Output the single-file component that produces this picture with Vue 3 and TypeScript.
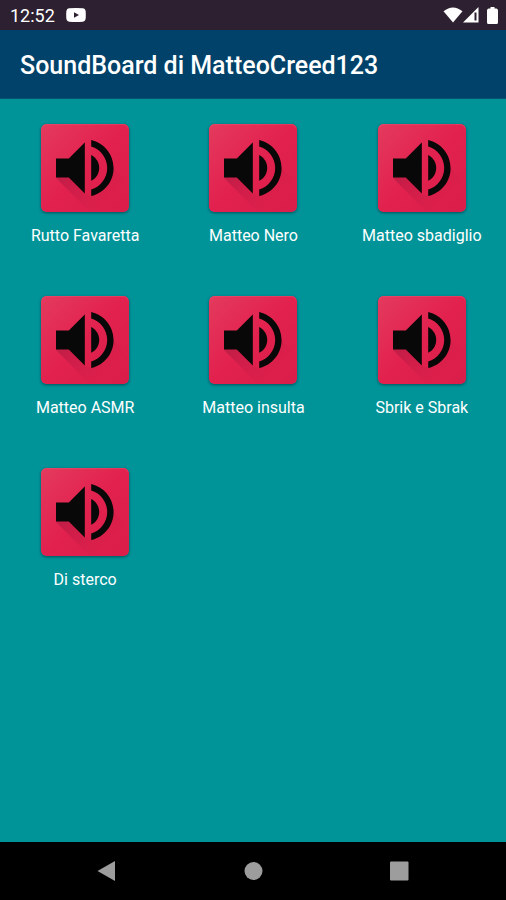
<script setup lang="ts">
interface Sound {
  id: number
  label: string
}

const title = 'SoundBoard di MatteoCreed123'

const sounds: Sound[] = [
  'Rutto Favaretta',
  'Matteo Nero',
  'Matteo sbadiglio',
  'Matteo ASMR',
  'Matteo insulta',
  'Sbrik e Sbrak',
  'Di sterco',
].map((label, id) => ({ id, label }))
</script>

<template>
  <div class="screen">
    <div class="status-bar">
      <div class="status-group">
        <span>12:52</span>
        <svg class="video-icon" viewBox="0 0 20 14" aria-hidden="true">
          <path d="M3 .3Q10-.2 17 .3Q19.300.6 19.600 3Q20 7 19.600 11Q19.300 13.400 17 13.700Q10 14.200 3 13.700Q.7 13.400.4 11Q0 7 .4 3Q.7.6 3 .3z" fill="#fff" />
          <path d="M8 4.300v5.400L13 7z" fill="#2d2030" />
        </svg>
      </div>
      <div class="status-icons">
        <svg width="20" height="16" viewBox="0 0 20 16" aria-hidden="true">
          <path d="M10 15.500L.5 4.300Q10-3.300 19.500 4.300z" fill="#fff" />
        </svg>
        <svg width="16" height="16" viewBox="0 0 16 16" aria-hidden="true">
          <path d="M15.500 0v15.500H0z" fill="#fff" />
          <path d="M11.500 5.500h2v8h-2z" fill="#2d2030" />
        </svg>
        <svg class="battery" width="11" height="17" viewBox="0 0 11 17" aria-hidden="true">
          <path d="M3.500 0h4v1.500H9.500Q11 2 11 3.500v12Q11 17 9.500 17h-8Q0 17 0 15.500v-12Q0 2 1.500 1.500h2z" fill="#fff" />
        </svg>
      </div>
    </div>

    <header class="app-bar">
      <h1>{{ title }}</h1>
    </header>

    <main class="board">
      <button v-for="sound in sounds" :key="sound.id" class="sound" type="button">
        <svg class="tile" viewBox="0 0 88 88" aria-hidden="true">
          <defs>
            <linearGradient :id="`face-${sound.id}`" x1="0" y1="0" x2="1" y2="1">
              <stop offset="0" stop-color="#e43a5e" />
              <stop offset="0.5" stop-color="#e2214e" />
              <stop offset="1" stop-color="#d91e49" />
            </linearGradient>
            <linearGradient :id="`shade-${sound.id}`" gradientUnits="userSpaceOnUse" x1="30" y1="30" x2="72" y2="72">
              <stop offset="0.2" stop-color="#8c1238" stop-opacity="0.35" />
              <stop offset="1" stop-color="#b0183f" stop-opacity="0" />
            </linearGradient>
          </defs>
          <rect width="88" height="88" rx="5" :fill="`url(#face-${sound.id})`" />
          <path d="M15 54L44 18V70L50 72L72 44L88 60V88H49z" :fill="`url(#shade-${sound.id})`" />
          <path d="M1 4Q2 .5 5 .5H83Q86 .5 87 4" fill="none" stroke="#ee5872" stroke-opacity=".4" />
          <g transform="translate(5.400 5.600) scale(3.200)" fill="#080808">
            <path d="M3 9v6h4l5 5V4L7 9H3z" />
            <path d="M16.500 12c0-1.770-1.020-3.290-2.500-4.030v8.050c1.480-.73 2.500-2.250 2.500-4.020z" />
            <path d="M14 3.230v2.060c2.890.86 5 3.540 5 6.710s-2.110 5.850-5 6.710v2.060c4.010-.91 7-4.490 7-8.770s-2.990-7.860-7-8.770z" />
          </g>
        </svg>
        <span class="label">{{ sound.label }}</span>
      </button>
    </main>

    <nav class="nav-bar" aria-label="System">
      <button type="button" aria-label="Back">
        <svg width="20" height="22" viewBox="0 0 20 22"><path d="M18 1v20L.5 11z" /></svg>
      </button>
      <button type="button" aria-label="Home">
        <svg width="20" height="22" viewBox="0 0 20 22"><circle cx="10.500" cy="11" r="9" /></svg>
      </button>
      <button type="button" aria-label="Recent apps">
        <svg width="20" height="22" viewBox="0 0 20 22"><rect x="1" y="1.500" width="18.500" height="19" rx="1" /></svg>
      </button>
    </nav>
  </div>
</template>

<style>
body {
  margin: 0;
  background: #009499;
}
</style>

<style scoped>
.screen {
  display: flex;
  flex-direction: column;
  min-height: 100vh;
  background: #009499;
  color: #fff;
  font-family: Roboto, "Liberation Sans", sans-serif;
}

.status-bar {
  display: flex;
  justify-content: space-between;
  align-items: center;
  box-sizing: border-box;
  height: 30px;
  padding: 0 8px 0 10px;
  background: #2d2030;
  font-size: 18px;
}

.status-group {
  display: flex;
  align-items: center;
  gap: 11px;
}

.status-icons {
  display: flex;
  align-items: center;
}

.video-icon {
  width: 20px;
  height: 14px;
}

.battery {
  margin-left: 8px;
}

.app-bar {
  display: flex;
  align-items: center;
  box-sizing: border-box;
  height: 69px;
  padding: 3px 20px 0;
  background: #00426a;
  border-bottom: 1px solid #05546f;
}

h1 {
  margin: 0;
  font-size: 25px;
  font-weight: 500;
  line-height: 32px;
}

.board {
  flex: 1;
  display: grid;
  grid-template-columns: repeat(3, 1fr);
  grid-auto-rows: 148px;
  row-gap: 24px;
  padding: 25px 0 25px 1px;
}

button {
  margin: 0;
  padding: 0;
  border: 0;
  background: none;
  color: inherit;
  font: inherit;
  cursor: pointer;
}

.sound {
  display: flex;
  flex-direction: column;
  align-items: center;
  gap: 13px;
}

.tile {
  width: 88px;
  height: 88px;
  border-radius: 5px;
  box-shadow: 0 1px 3px rgb(0 40 50 / 60%);
}

.label {
  font-size: 16px;
  line-height: 22px;
  white-space: nowrap;
}

.nav-bar {
  display: flex;
  justify-content: center;
  align-items: center;
  gap: 126px;
  box-sizing: border-box;
  height: 58px;
  background: #000;
}

.nav-bar button {
  display: flex;
}

.nav-bar svg {
  fill: #9d9d9d;
}
</style>
